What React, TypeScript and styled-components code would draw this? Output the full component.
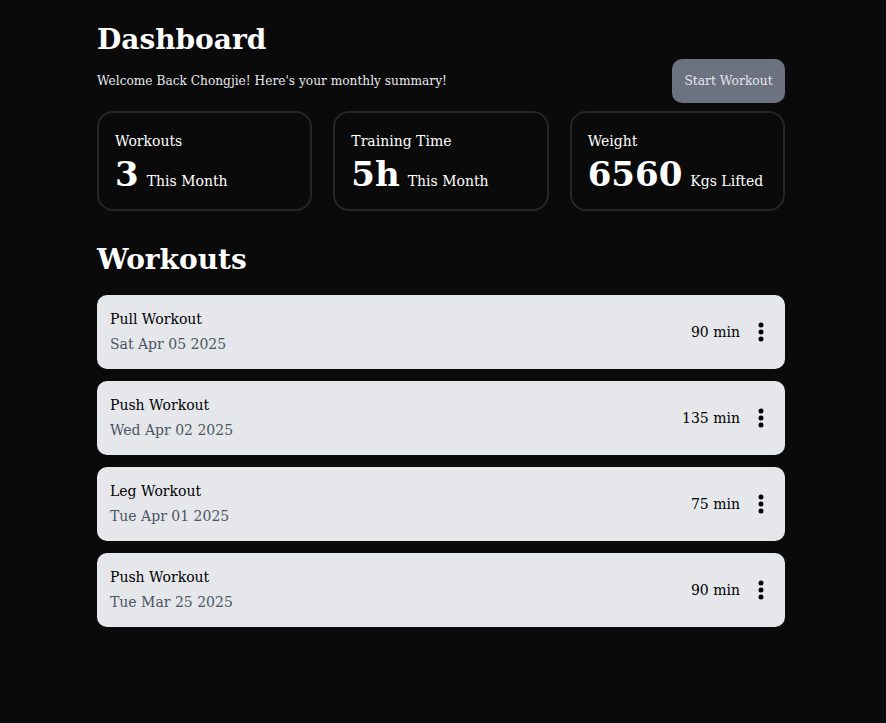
import React from "react";
import styled, { createGlobalStyle } from "styled-components";

const GlobalStyle = createGlobalStyle`
  html, body {
    margin: 0;
    padding: 0;
    background: #0a0a0a;
  }
  body {
    font-family: "DejaVu Serif", "Liberation Serif", serif;
    color: #ffffff;
  }
  * { box-sizing: border-box; }
`;

const Page = styled.main`
  width: 692px;
  margin: 0 auto;
  padding: 21px 4px 40px 0;
  display: flex;
  flex-direction: column;
`;

const Title = styled.h1`
  margin: 0;
  font-size: 28px;
  line-height: 38px;
  font-weight: 700;
  color: #ffffff;
`;

const HeaderRow = styled.div`
  display: flex;
  align-items: center;
  justify-content: space-between;
`;

const Subtitle = styled.p`
  margin: 0;
  font-size: 12.2px;
  color: #e5e7eb;
`;

const StartButton = styled.button`
  height: 44px;
  width: 113px;
  border: none;
  border-radius: 10px;
  background: #6b7280;
  color: #e5e7eb;
  font-family: inherit;
  font-size: 12.3px;
  cursor: pointer;
`;

const Stats = styled.section`
  margin-top: 8px;
  display: grid;
  grid-template-columns: repeat(3, 1fr);
  gap: 21px;
`;

const StatCard = styled.div`
  border: 2px solid #262626;
  border-radius: 16px;
  padding: 16px;
  display: flex;
  flex-direction: column;
`;

const StatLabel = styled.span`
  font-size: 14px;
  line-height: 24px;
`;

const StatValueRow = styled.div`
  display: flex;
  align-items: baseline;
  gap: 8px;
  height: 40px;
  padding-top: 4px;
  line-height: 1;
`;

const StatValue = styled.span`
  font-size: 34px;
  font-weight: 700;
`;

const StatUnit = styled.span`
  font-size: 14px;
`;

const SectionTitle = styled.h2`
  margin: 30px 0 0;
  font-size: 28px;
  line-height: 38px;
  font-weight: 700;
`;

const List = styled.ul`
  list-style: none;
  margin: 16px 0 0;
  padding: 0;
  display: flex;
  flex-direction: column;
  gap: 12px;
`;

const Item = styled.li`
  background: #e5e7eb;
  border-radius: 10px;
  padding: 12px 12px 12px 13px;
  display: flex;
  align-items: center;
  justify-content: space-between;
`;

const ItemInfo = styled.div`
  display: flex;
  flex-direction: column;
`;

const ItemName = styled.span`
  font-size: 14px;
  line-height: 25px;
  color: #000000;
`;

const ItemDate = styled.span`
  font-size: 14px;
  line-height: 25px;
  color: #4b5563;
`;

const ItemRight = styled.div`
  display: flex;
  align-items: center;
  gap: 9px;
`;

const Duration = styled.span`
  font-size: 14px;
  color: #000000;
`;

const MenuButton = styled.button`
  width: 24px;
  height: 24px;
  padding: 0;
  border: none;
  background: transparent;
  display: flex;
  align-items: center;
  justify-content: center;
  color: #000000;
  cursor: pointer;
`;

const Kebab = () => (
  <svg width="24" height="24" viewBox="0 0 24 24" fill="currentColor">
    <circle cx="12" cy="5" r="2.5" />
    <circle cx="12" cy="12" r="2.5" />
    <circle cx="12" cy="19" r="2.5" />
  </svg>
);

const stats = [
  { label: "Workouts", value: "3", unit: "This Month" },
  { label: "Training Time", value: "5h", unit: "This Month" },
  { label: "Weight", value: "6560", unit: "Kgs Lifted" },
];

const workouts = [
  { name: "Pull Workout", date: "Sat Apr 05 2025", duration: "90 min" },
  { name: "Push Workout", date: "Wed Apr 02 2025", duration: "135 min" },
  { name: "Leg Workout", date: "Tue Apr 01 2025", duration: "75 min" },
  { name: "Push Workout", date: "Tue Mar 25 2025", duration: "90 min" },
];

export default function App() {
  return (
    <>
      <GlobalStyle />
      <Page>
        <Title>Dashboard</Title>
        <HeaderRow>
          <Subtitle>Welcome Back Chongjie! Here's your monthly summary!</Subtitle>
          <StartButton>Start Workout</StartButton>
        </HeaderRow>
        <Stats>
          {stats.map((s) => (
            <StatCard key={s.label}>
              <StatLabel>{s.label}</StatLabel>
              <StatValueRow>
                <StatValue>{s.value}</StatValue>
                <StatUnit>{s.unit}</StatUnit>
              </StatValueRow>
            </StatCard>
          ))}
        </Stats>
        <SectionTitle>Workouts</SectionTitle>
        <List>
          {workouts.map((w, i) => (
            <Item key={i}>
              <ItemInfo>
                <ItemName>{w.name}</ItemName>
                <ItemDate>{w.date}</ItemDate>
              </ItemInfo>
              <ItemRight>
                <Duration>{w.duration}</Duration>
                <MenuButton aria-label="More">
                  <Kebab />
                </MenuButton>
              </ItemRight>
            </Item>
          ))}
        </List>
      </Page>
    </>
  );
}
